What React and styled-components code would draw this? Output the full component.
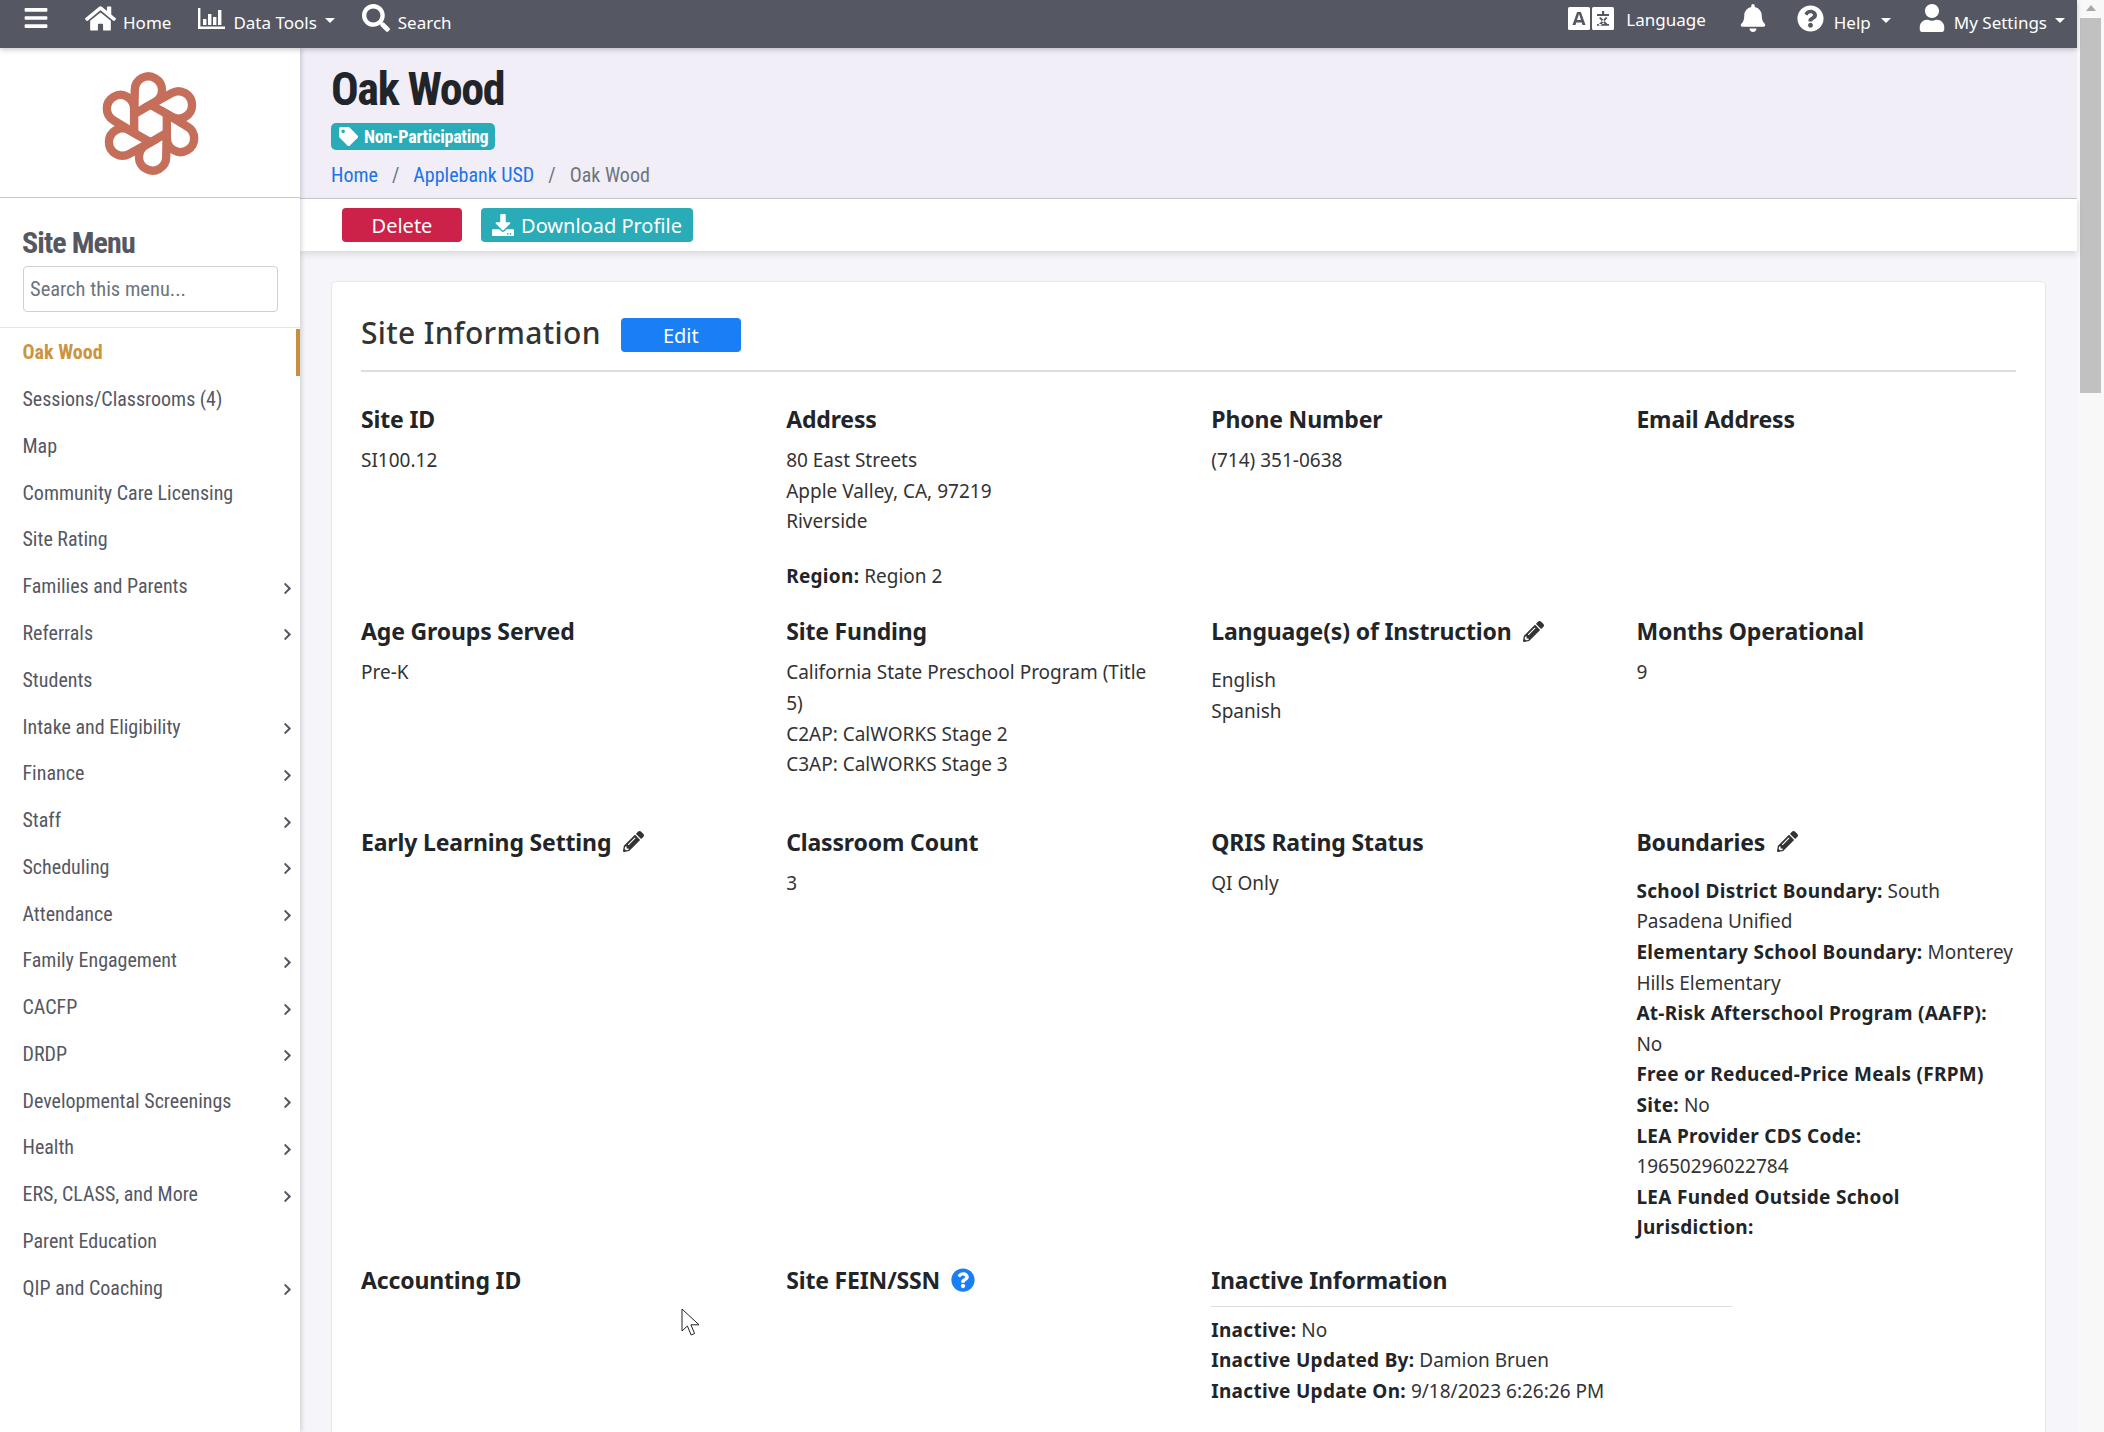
import React from 'react';
import styled, { createGlobalStyle } from 'styled-components';
import {
  FaBars, FaHome, FaSearch, FaBell, FaQuestionCircle, FaUser, FaTag,
  FaDownload, FaPencilAlt, FaChevronRight,
} from 'react-icons/fa';

const GlobalStyle = createGlobalStyle`
  html, body { margin: 0; height: 100%; overflow: hidden; background: #fff; }
  body { font-family: "Noto Sans", "Open Sans", sans-serif; color: #333; }
  * { box-sizing: border-box; }
`;

const menu = [
  { label: 'Oak Wood', active: true },
  { label: 'Sessions/Classrooms (4)' },
  { label: 'Map' },
  { label: 'Community Care Licensing' },
  { label: 'Site Rating' },
  { label: 'Families and Parents', more: true },
  { label: 'Referrals', more: true },
  { label: 'Students' },
  { label: 'Intake and Eligibility', more: true },
  { label: 'Finance', more: true },
  { label: 'Staff', more: true },
  { label: 'Scheduling', more: true },
  { label: 'Attendance', more: true },
  { label: 'Family Engagement', more: true },
  { label: 'CACFP', more: true },
  { label: 'DRDP', more: true },
  { label: 'Developmental Screenings', more: true },
  { label: 'Health', more: true },
  { label: 'ERS, CLASS, and More', more: true },
  { label: 'Parent Education' },
  { label: 'QIP and Coaching', more: true },
];

const Logo = () => (
  <svg width="105" height="111" viewBox="-50 -53 100 106" fill="none">
    {[0, 60, 120, 180, 240, 300].map((a) => (
      <path
        key={a}
        transform={`rotate(${a})`}
        d="M-15.5 -9 L-15 -32 A13 13 0 1 1 4.5 -20.7 Z"
        stroke="#c56f5b"
        strokeWidth="8"
        strokeLinejoin="miter"
      />
    ))}
  </svg>
);

const BarsIcon = () => (
  <svg width="27" height="21" viewBox="0 0 27 21" fill="#fff">
    <path d="M0 0h2.4v18.6H27V21H0z" />
    <rect x="5" y="11" width="3.4" height="6" />
    <rect x="10" y="6" width="3.4" height="11" />
    <rect x="15" y="9" width="3.4" height="8" />
    <rect x="20" y="2" width="3.4" height="15" />
  </svg>
);

const LanguageIcon = () => (
  <svg width="46" height="23" viewBox="0 0 46 23">
    <rect x="0" width="22" height="23" rx="1.5" fill="#fff" />
    <rect x="24" width="22" height="23" rx="1.5" fill="#fff" />
    <path d="M4.5 18l4.6-13h3.8l4.6 13h-3l-.8-2.6H8.300L7.500 18zM9 13h4l-2-6z" fill="#555762" />
    <path d="M29 7h12v2H29zM34 4h2.200v3H34zM31 11l1.600-1 7.400 7.600-1.600 1.400zM39.500 11l-1.600-1-7.400 7.600 1.600 1.400zM29 17h12v1.800H29z" fill="#555762" />
  </svg>
);

const CursorIcon = () => (
  <svg width="19" height="28" viewBox="0 0 19 28">
    <path d="M1 1v22l5.4-5 3.8 9 3.4-1.500-3.700-8.700H18z" fill="#fff" stroke="#222" strokeWidth="1" />
  </svg>
);

const App = () => (
  <>
    <GlobalStyle />
    <Page>
      <Shell>
        <NavBar>
          <Burger><FaBars size={26} /></Burger>
          <NavItem $gap={7} $ml={37}><FaHome size={31} /><NavLabel>Home</NavLabel></NavItem>
          <NavItem $gap={8} $ml={27}><BarsIcon /><NavLabel>Data Tools</NavLabel><Caret /></NavItem>
          <NavItem $gap={8} $ml={27}><FaSearch size={28} /><NavLabel>Search</NavLabel></NavItem>
          <NavRight>
            <NavItem $gap={12}><LanguageIcon /><NavLabel $up>Language</NavLabel></NavItem>
            <NavItem $ml={33}><FaBell size={28} /></NavItem>
            <NavItem $gap={10} $ml={30}><FaQuestionCircle size={27} /><NavLabel>Help</NavLabel><Caret /></NavItem>
            <NavItem $gap={8} $ml={27}><FaUser size={28} /><NavLabel>My Settings</NavLabel><Caret /></NavItem>
          </NavRight>
        </NavBar>
        <Body>
          <Sidebar>
            <LogoBox><Logo /></LogoBox>
            <MenuHead>
              <MenuTitle>Site Menu</MenuTitle>
              <MenuSearch placeholder="Search this menu..." />
            </MenuHead>
            <MenuList>
              {menu.map((m) => (
                <MenuItem key={m.label} $active={m.active}>
                  <span>{m.label}</span>
                  {m.more && <MenuArrow><FaChevronRight size={13} /></MenuArrow>}
                </MenuItem>
              ))}
            </MenuList>
          </Sidebar>
          <Main>
            <TitleBand>
              <PageTitle>Oak Wood</PageTitle>
              <Badge><FaTag size={19} />Non-Participating</Badge>
              <Crumbs>
                <CrumbLink>Home</CrumbLink>
                <CrumbSep>/</CrumbSep>
                <CrumbLink>Applebank USD</CrumbLink>
                <CrumbSep>/</CrumbSep>
                <CrumbCurrent>Oak Wood</CrumbCurrent>
              </Crumbs>
            </TitleBand>
            <ActionBar>
              <ActionButton $bg="#cc2148" $w={120}>Delete</ActionButton>
              <ActionButton $bg="#2aacb8" $w={212}><FaDownload size={22} />Download Profile</ActionButton>
            </ActionBar>
            <Content>
              <Card>
                <CardHead>
                  <CardTitle>Site Information</CardTitle>
                  <EditButton>Edit</EditButton>
                </CardHead>
                <InfoGrid>
                  <Cell>
                    <Label>Site ID</Label>
                    <Line>SI100.12</Line>
                  </Cell>
                  <Cell>
                    <Label>Address</Label>
                    <Line>80 East Streets</Line>
                    <Line>Apple Valley, CA, 97219</Line>
                    <Line>Riverside</Line>
                    <RegionLine><b>Region:</b> Region 2</RegionLine>
                  </Cell>
                  <Cell>
                    <Label>Phone Number</Label>
                    <Line>(714) 351-0638</Line>
                  </Cell>
                  <Cell>
                    <Label>Email Address</Label>
                  </Cell>

                  <Cell>
                    <Label>Age Groups Served</Label>
                    <Line>Pre-K</Line>
                  </Cell>
                  <FundingCell>
                    <Label>Site Funding</Label>
                    <Line>California State Preschool Program (Title 5)</Line>
                    <Line>C2AP: CalWORKS Stage 2</Line>
                    <Line>C3AP: CalWORKS Stage 3</Line>
                  </FundingCell>
                  <Cell>
                    <Label $edit>Language(s) of Instruction <Pencil><FaPencilAlt size={21} /></Pencil></Label>
                    <Line>English</Line>
                    <Line>Spanish</Line>
                  </Cell>
                  <Cell>
                    <Label>Months Operational</Label>
                    <Line>9</Line>
                  </Cell>

                  <Cell>
                    <Label>Early Learning Setting <Pencil><FaPencilAlt size={21} /></Pencil></Label>
                  </Cell>
                  <Cell>
                    <Label>Classroom Count</Label>
                    <Line>3</Line>
                  </Cell>
                  <Cell>
                    <Label>QRIS Rating Status</Label>
                    <Line>QI Only</Line>
                  </Cell>
                  <Cell>
                    <Label $edit>Boundaries <Pencil><FaPencilAlt size={21} /></Pencil></Label>
                    <Line><b>School District Boundary:</b> South Pasadena Unified</Line>
                    <Line><b>Elementary School Boundary:</b> Monterey Hills Elementary</Line>
                    <Line><b>At-Risk Afterschool Program (AAFP):</b><br />No</Line>
                    <Line><b>Free or Reduced-Price Meals (FRPM) Site:</b> No</Line>
                    <Line><b>LEA Provider CDS Code:</b><br />19650296022784</Line>
                    <Line><b>LEA Funded Outside School<br />Jurisdiction:</b></Line>
                  </Cell>

                  <Cell>
                    <Label>Accounting ID</Label>
                  </Cell>
                  <Cell>
                    <Label>Site FEIN/SSN <HelpDot><FaQuestionCircle size={24} /></HelpDot></Label>
                  </Cell>
                  <InactiveCell>
                    <Label $tight>Inactive Information</Label>
                    <Rule />
                    <Line><b>Inactive:</b> No</Line>
                    <Line><b>Inactive Updated By:</b> Damion Bruen</Line>
                    <Line><b>Inactive Update On:</b> 9/18/2023 6:26:26 PM</Line>
                  </InactiveCell>
                </InfoGrid>
              </Card>
            </Content>
          </Main>
        </Body>
      </Shell>
      <ScrollRail>
        <ScrollUp />
        <ScrollThumb />
      </ScrollRail>
      <Cursor><CursorIcon /></Cursor>
    </Page>
  </>
);

const Page = styled.div`
  position: relative;
  display: flex;
  width: 2104px;
  height: 1432px;
  overflow: hidden;
`;

const Shell = styled.div`
  display: flex;
  flex-direction: column;
  width: 2077px;
  height: 100%;
`;

const NavBar = styled.header`
  position: relative;
  z-index: 3;
  display: flex;
  align-items: flex-start;
  flex: 0 0 48px;
  padding: 0 12px 0 24px;
  background: #555762;
  color: #fff;
  box-shadow: 0 2px 5px rgba(0, 0, 0, 0.2);
`;

const Burger = styled.div`
  display: flex;
  width: 24px;
  height: 36px;
  align-items: center;
  justify-content: center;
`;

const NavItem = styled.div`
  display: flex;
  align-items: center;
  gap: ${(p) => p.$gap || 0}px;
  margin-left: ${(p) => p.$ml || 0}px;
  height: 36px;
`;

const NavLabel = styled.span`
  position: relative;
  top: ${(p) => (p.$up ? 1 : 4)}px;
  font-size: 17px;
  font-stretch: 85%;
`;

const Caret = styled.i`
  position: relative;
  top: 2px;
  display: block;
  width: 0;
  height: 0;
  border-left: 5px solid transparent;
  border-right: 5px solid transparent;
  border-top: 5px solid #fff;
`;

const NavRight = styled.div`
  display: flex;
  align-items: center;
  margin-left: auto;
`;

const Body = styled.div`
  display: flex;
  flex: 1;
  min-height: 0;
`;

const Sidebar = styled.aside`
  position: relative;
  z-index: 2;
  flex: 0 0 300px;
  background: #fff;
  box-shadow: 2px 0 4px rgba(0, 0, 0, 0.14);
  font-family: Roboto, sans-serif;
`;

const LogoBox = styled.div`
  display: flex;
  align-items: center;
  justify-content: center;
  height: 150px;
  padding-top: 2px;
  border-bottom: 1px solid #c9c9cf;
`;

const MenuHead = styled.div`
  padding: 28px 22px 15px 23px;
  border-bottom: 1px solid #e6e6e6;
`;

const MenuTitle = styled.h2`
  margin: 0 0 6px -1px;
  font-size: 30px;
  line-height: 34px;
  font-weight: 700;
  letter-spacing: -0.9px;
  color: #555762;
  font-stretch: 85%;
`;

const MenuSearch = styled.input`
  display: block;
  width: 255px;
  height: 46px;
  padding: 0 6px;
  border: 1px solid #cfcfd4;
  border-radius: 4px;
  font: 400 20.5px Roboto, sans-serif;
  font-stretch: 85%;
  color: #333;
  &::placeholder { color: #6c757d; opacity: 1; }
`;

const MenuList = styled.nav`
  display: flex;
  flex-direction: column;
  padding-top: 1px;
`;

const MenuItem = styled.div`
  display: flex;
  align-items: center;
  justify-content: space-between;
  height: 46.77px;
  padding: 0 6px 0 22.5px;
  font-size: 20px;
  font-stretch: 85%;
  font-weight: ${(p) => (p.$active ? 700 : 400)};
  color: ${(p) => (p.$active ? '#cc9440' : '#555762')};
  box-shadow: ${(p) => (p.$active ? 'inset -4px 0 0 #c98f3f' : 'none')};
`;

const MenuArrow = styled.span`
  display: flex;
  position: relative;
  top: 2px;
  color: #555762;
`;

const Main = styled.main`
  flex: 1;
  min-width: 0;
  display: flex;
  flex-direction: column;
  background: #f6f5f9;
`;

const TitleBand = styled.section`
  height: 151px;
  padding: 16px 0 0 31px;
  background: #f1eef8;
  border-bottom: 1px solid #c9c9cf;
  font-family: Roboto, sans-serif;
`;

const PageTitle = styled.h1`
  margin: 0 0 9px;
  font-size: 46px;
  line-height: 50px;
  font-weight: 700;
  letter-spacing: -1.4px;
  color: #212529;
  font-stretch: 85%;
`;

const Badge = styled.div`
  display: inline-flex;
  align-items: center;
  gap: 6px;
  height: 27px;
  padding: 0 7px 0 8px;
  border-radius: 5px;
  background: #2aacb8;
  color: #fff;
  font-size: 18px;
  font-weight: 700;
  letter-spacing: -0.25px;
  font-stretch: 85%;
  vertical-align: top;
`;

const Crumbs = styled.div`
  display: flex;
  align-items: center;
  height: 24px;
  margin-top: 13px;
  font-size: 20px;
  font-stretch: 85%;
`;

const CrumbLink = styled.span`
  color: #1a73e8;
`;

const CrumbCurrent = styled.span`
  color: #6c757d;
`;

const CrumbSep = styled.span`
  margin: 0 14px;
  color: #6c757d;
`;

const ActionBar = styled.div`
  position: relative;
  display: flex;
  gap: 19px;
  flex: 0 0 52px;
  padding: 9px 0 0 42px;
  background: #fff;
  box-shadow: 0 3px 7px rgba(0, 0, 0, 0.12);
`;

const ActionButton = styled.button`
  display: flex;
  align-items: center;
  justify-content: center;
  gap: 7px;
  width: ${(p) => p.$w}px;
  height: 34px;
  border: 0;
  border-radius: 4px;
  background: ${(p) => p.$bg};
  color: #fff;
  font: 400 20px "Noto Sans", sans-serif;
  font-stretch: 85%;
`;

const Content = styled.div`
  flex: 1;
  min-height: 0;
  padding: 30px 31px 0;
`;

const Card = styled.div`
  padding: 31px 29px 40px;
  background: #fff;
  border: 1px solid #e7e6ec;
  border-radius: 5px;
`;

const CardHead = styled.div`
  display: flex;
  align-items: center;
  gap: 20px;
  height: 59px;
  padding: 2px 0 15px;
  border-bottom: 2px solid #dedede;
`;

const CardTitle = styled.h2`
  margin: -4px 0 0;
  font-size: 30px;
  line-height: 40px;
  font-weight: 500;
  letter-spacing: 0.33px;
  color: #333;
  font-stretch: 85%;
`;

const EditButton = styled.button`
  width: 120px;
  height: 34px;
  border: 0;
  border-radius: 4px;
  background: #1a7ef5;
  color: #fff;
  font: 400 20px "Noto Sans", sans-serif;
  font-stretch: 85%;
`;

const InfoGrid = styled.div`
  display: grid;
  grid-template-columns: repeat(4, 1fr);
  column-gap: 45.5px;
  row-gap: 22px;
  margin-top: 32px;
`;

const Cell = styled.div`
  min-width: 0;
`;

const FundingCell = styled(Cell)`
  padding-bottom: 25px;
`;

const InactiveCell = styled(Cell)`
  grid-column: span 2;
  max-width: 521px;
`;

const Label = styled.h3`
  display: flex;
  align-items: center;
  margin: 0 0 ${(p) => (p.$tight ? 0 : p.$edit ? 19 : 11)}px;
  height: 30px;
  font-size: 23px;
  line-height: 30px;
  font-weight: 700;
  letter-spacing: -0.15px;
  color: #212529;
  font-stretch: 85%;
  white-space: pre;
`;

const Line = styled.p`
  margin: 0;
  font-size: 19px;
  line-height: 30.6px;
  color: #333;
  font-stretch: 85%;
  b { font-weight: 700; letter-spacing: 0.3px; color: #212529; }
`;

const RegionLine = styled(Line)`
  margin: 24px 0 3px;
`;

const Pencil = styled.span`
  display: inline-flex;
  margin-left: 6px;
  color: #333;
`;

const HelpDot = styled.span`
  display: inline-flex;
  margin-left: 5px;
  color: #1a7ef5;
`;

const Rule = styled.hr`
  margin: 11px 0 8px;
  border: 0;
  border-top: 1px solid #dedede;
`;

const ScrollRail = styled.div`
  display: flex;
  flex-direction: column;
  align-items: center;
  flex: 0 0 27px;
  background: #f8f8f8;
`;

const ScrollUp = styled.i`
  display: block;
  width: 0;
  height: 0;
  margin: 5px 0 7px;
  border-left: 5px solid transparent;
  border-right: 5px solid transparent;
  border-bottom: 6px solid #a8a8a8;
`;

const ScrollThumb = styled.div`
  width: 21px;
  height: 375px;
  background: #c1c1c1;
`;

const Cursor = styled.div`
  position: absolute;
  left: 681px;
  top: 1308px;
`;

export default App;
